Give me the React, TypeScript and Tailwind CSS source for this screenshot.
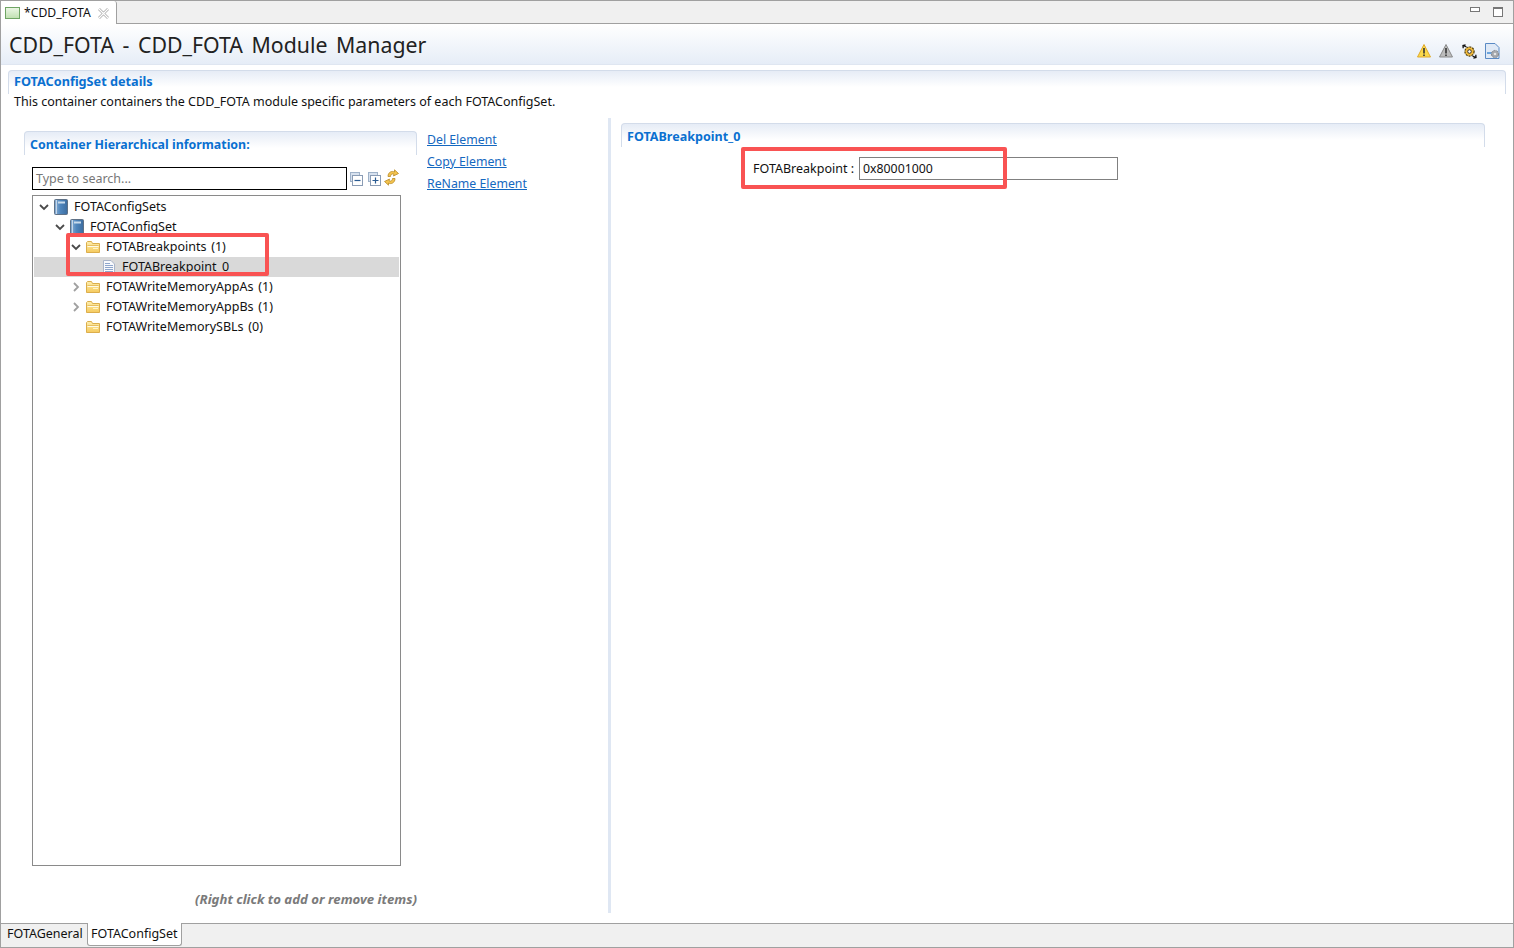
import React from 'react';

const Chevron = ({ open }: { open: boolean }) => (
  <svg width="12" height="12" viewBox="0 0 12 12" className="shrink-0">
    {open ? (
      <path d="M2 4 L6 8 L10 4" fill="none" stroke="#4a4a4a" strokeWidth="1.8" />
    ) : (
      <path d="M4 2 L8 6 L4 10" fill="none" stroke="#a0a0a0" strokeWidth="1.8" />
    )}
  </svg>
);

const BookIcon = () => (
  <svg width="14" height="16" viewBox="0 0 14 16" className="shrink-0">
    <defs>
      <linearGradient id="bookFill" x1="0" y1="0" x2="1" y2="0">
        <stop offset="0" stopColor="#8fb2d6" />
        <stop offset="0.45" stopColor="#4f86bd" />
        <stop offset="1" stopColor="#3c6c9f" />
      </linearGradient>
    </defs>
    <rect x="0.5" y="0.5" width="13" height="15" rx="1" fill="url(#bookFill)" stroke="#5f7186" />
    <path d="M2.5 1 V15" stroke="#c6d7e8" />
    <rect x="4" y="2.5" width="7" height="2" fill="#c9dbec" />
  </svg>
);

const FolderIcon = () => (
  <svg width="14" height="12" viewBox="0 0 14 12" className="shrink-0">
    <defs>
      <linearGradient id="folderFill" x1="0" y1="0" x2="0" y2="1">
        <stop offset="0" stopColor="#fdeeae" />
        <stop offset="1" stopColor="#f5ca5e" />
      </linearGradient>
    </defs>
    <path d="M0.5 1.5 L0.5 11.5 L13.5 11.5 L13.5 2.5 L6.5 2.5 L5.5 0.5 L1.5 0.5 Z" fill="url(#folderFill)" stroke="#dcae4c" />
    <path d="M1.5 4.5 H12.5" stroke="#e6bf62" />
    <path d="M1.5 5.5 H12.5" stroke="#fffbe6" />
    <path d="M7 7.5 H12" stroke="#fff4c8" />
  </svg>
);

const FileIcon = () => (
  <svg width="12" height="14" viewBox="0 0 12 14" className="shrink-0">
    <path d="M0.5 0.5 L8 0.5 L11.5 4 L11.5 13.5 L0.5 13.5 Z" fill="#f8f9fc" stroke="#aab5c9" />
    <path d="M2 3.5 H7 M2 5.5 H10 M2 7.5 H10 M2 9.5 H10 M2 11.5 H10" stroke="#8ea6cc" />
  </svg>
);

const TreeRow = ({
  indent,
  arrow,
  icon,
  label,
  selected,
}: {
  indent: string;
  arrow?: 'open' | 'closed';
  icon: React.ReactNode;
  label: string;
  selected?: boolean;
}) => (
  <div className={`h-5 flex items-center ${indent} ${selected ? 'bg-[#d9d9d9]' : ''}`}>
    <div className="w-4 flex justify-center shrink-0">{arrow && <Chevron open={arrow === 'open'} />}</div>
    <div className="w-4 flex justify-center shrink-0 ml-px">{icon}</div>
    <span className="ml-[5px] whitespace-nowrap text-[#111] [word-spacing:1.5px]">{label}</span>
  </div>
);

const SectionTitle = ({ children, className }: { children: React.ReactNode; className: string }) => (
  <div className={`rounded-t-[4px] border-t border-x border-[#d3dcea] bg-gradient-to-b from-[#e6ecf6] to-white to-70% font-bold text-[#0a70d0] ${className}`}>
    {children}
  </div>
);

const HeaderIcons = () => (
  <div className="flex items-center gap-[8.5px]">
    <svg width="14" height="14" viewBox="0 0 14 14">
      <path d="M7 0.5 L13.5 13 L0.5 13 Z" fill="#fbd94a" stroke="#e0a92a" strokeLinejoin="round" />
      <rect x="6.2" y="4" width="1.6" height="5.5" fill="#333" />
      <rect x="6.2" y="10.5" width="1.6" height="1.5" fill="#333" />
    </svg>
    <svg width="14" height="14" viewBox="0 0 14 14">
      <path d="M7 0.5 L13.5 13 L0.5 13 Z" fill="#bcbcbc" stroke="#8a8a8a" strokeLinejoin="round" />
      <rect x="6.2" y="4" width="1.6" height="5.5" fill="#333" />
      <rect x="6.2" y="10.5" width="1.6" height="1.5" fill="#333" />
    </svg>
    <svg width="15" height="15" viewBox="0 0 15 15">
      <circle cx="7.5" cy="7.5" r="4.6" fill="#f0b93a" stroke="#4d3c0c" strokeWidth="1.2" strokeDasharray="2 1" />
      <circle cx="7.5" cy="7.5" r="1.8" fill="#fff" stroke="#333" />
      <path d="M1 1.5 L4.5 3 M1.2 4.2 L1 1.5 L3.6 0.8" fill="none" stroke="#111" strokeWidth="1.3" />
      <path d="M14 13.5 L10.5 12 M13.8 10.8 L14 13.5 L11.4 14.2" fill="none" stroke="#111" strokeWidth="1.3" />
    </svg>
    <svg width="15" height="16" viewBox="0 0 15 16">
      <path d="M0.5 0.5 L10 0.5 L14 4.5 L14 15.5 L0.5 15.5 Z" fill="#dfe9f6" stroke="#5a8ac4" />
      <rect x="2" y="9" width="5" height="2" fill="#6aa3dc" />
      <circle cx="10" cy="11" r="3.6" fill="#a5a8ad" stroke="#85888d" strokeDasharray="2 1" />
      <circle cx="10" cy="11" r="1.3" fill="#e5e5e5" />
    </svg>
  </div>
);

const ToolButtons = () => (
  <div className="flex items-center gap-[5px] ml-[3px]">
    <svg width="13" height="14" viewBox="0 0 13 14">
      <rect x="0.5" y="0.5" width="9" height="9" fill="#d7e1ee" stroke="#9fb2c9" />
      <rect x="2.5" y="3.5" width="10" height="10" fill="#fff" stroke="#8a9cb5" />
      <path d="M4.5 8.5 H10.5" stroke="#2a5b92" strokeWidth="1.2" />
    </svg>
    <svg width="13" height="14" viewBox="0 0 13 14">
      <rect x="0.5" y="0.5" width="9" height="9" fill="#d7e1ee" stroke="#9fb2c9" />
      <rect x="2.5" y="3.5" width="10" height="10" fill="#fff" stroke="#8a9cb5" />
      <path d="M4.5 8.5 H10.5 M7.5 5.5 V11.5" stroke="#2a5b92" strokeWidth="1.2" />
    </svg>
    <svg width="15" height="17" viewBox="0 0 15 17" className="-ml-[2px] -mt-[2px]">
      <path d="M4 7.5 C4 3 8 1.5 10.5 3 L10.5 0.8 L14.5 4.5 L9.5 7 L10 5.2 C8 4.3 6.5 5.5 6.5 7.5 Z" fill="#f3c34f" stroke="#b98a25" strokeWidth="0.8" />
      <path d="M11 9.5 C11 14 7 15.5 4.5 14 L4.5 16.2 L0.5 12.5 L5.5 10 L5 11.8 C7 12.7 8.5 11.5 8.5 9.5 Z" fill="#f3c34f" stroke="#b98a25" strokeWidth="0.8" />
    </svg>
  </div>
);

const App = () => {
  return (
    <div className="w-[1514px] h-[948px] overflow-hidden bg-white flex flex-col border-x border-b border-[#a0a0a0] text-[12.5px] leading-5 text-[#111] font-['Noto_Sans','DejaVu_Sans',sans-serif]">
      {/* editor tab */}
      <div className="h-6 shrink-0 flex bg-[#f0f0f0] border-t border-b border-[#a0a0a0]">
        <div className="w-[116px] h-[24px] flex items-center bg-white border-r border-[#a0a0a0] rounded-tr-[3px] pl-[4px] text-[12.2px]">
          <svg width="15" height="12" viewBox="0 0 15 12" className="shrink-0">
            <defs>
              <linearGradient id="tabFill" x1="0" y1="0" x2="0" y2="1">
                <stop offset="0" stopColor="#edf7e7" />
                <stop offset="1" stopColor="#bfe0b0" />
              </linearGradient>
            </defs>
            <rect x="0.5" y="0.5" width="14" height="11" fill="url(#tabFill)" stroke="#6fa564" />
          </svg>
          <span className="ml-[4px]">*CDD_FOTA</span>
          <svg width="11" height="11" viewBox="0 0 11 11" className="ml-[7px]">
            <path d="M1 1 L10 10 M10 1 L1 10" stroke="#a8a8a8" strokeWidth="2.6" />
            <path d="M1 1 L10 10 M10 1 L1 10" stroke="#fff" strokeWidth="1.2" />
          </svg>
        </div>
        <div className="flex-1 flex justify-end items-start pt-[6px] pr-[10px] gap-[13px]">
          <div className="w-[10px] h-[5px] border border-[#777] bg-white" />
          <div className="w-[10px] h-[10px] border border-[#777] border-t-2 bg-white" />
        </div>
      </div>

      {/* form header */}
      <div className="h-[41px] shrink-0 flex items-center justify-between pl-2 pr-[13px] bg-gradient-to-b from-white to-[#e6edf7] border-b border-[#dfe6f1]">
        <span className="text-[21.3px] leading-7 text-[#222] [word-spacing:3px] mt-[2px]">CDD_FOTA - CDD_FOTA Module Manager</span>
        <div className="mt-[14px]">
          <HeaderIcons />
        </div>
      </div>

      <div className="flex-1 flex flex-col min-h-0 pl-[7px] pr-[7px] pt-[5px]">
        <SectionTitle className="h-[24px] pl-[5px] leading-[20px] text-[12.7px]">FOTAConfigSet details</SectionTitle>
        <div className="pl-[6px] h-[24px] leading-[16px]">
          This container containers the CDD_FOTA module specific parameters of each FOTAConfigSet.
        </div>

        <div className="flex-1 flex min-h-0 pb-[10px]">
          {/* left column */}
          <div className="w-[600px] shrink-0 flex flex-col pl-[16px] pt-[13px] relative">
            <div className="flex">
              <div className="w-[393px] shrink-0">
                <SectionTitle className="h-[24px] pl-[5px] pt-[3px] text-[12.4px]">Container Hierarchical information:</SectionTitle>
                <div className="flex items-center pl-[8px] mt-[12px] mb-[5px]">
                  <div className="w-[315px] h-[23px] border border-black px-[3px] text-[#777] leading-[21px]">Type to search...</div>
                  <ToolButtons />
                </div>
              </div>
              <div className="flex flex-col pl-[10px] -mt-px gap-[2px] text-[12.3px] text-[#1468c0] underline">
                <a>Del Element</a>
                <a>Copy Element</a>
                <a>ReName Element</a>
              </div>
            </div>
            <div className="ml-[8px] w-[369px] h-[671px] border border-[#8a8a8a] pt-[1px] relative">
              <div className="pl-[1px] pr-[1px]">
                <TreeRow indent="pl-[2px]" arrow="open" icon={<BookIcon />} label="FOTAConfigSets" />
                <TreeRow indent="pl-[18px]" arrow="open" icon={<BookIcon />} label="FOTAConfigSet" />
                <TreeRow indent="pl-[34px]" arrow="open" icon={<FolderIcon />} label="FOTABreakpoints (1)" />
                <TreeRow indent="pl-[50px]" icon={<FileIcon />} label="FOTABreakpoint_0" selected />
                <TreeRow indent="pl-[34px]" arrow="closed" icon={<FolderIcon />} label="FOTAWriteMemoryAppAs (1)" />
                <TreeRow indent="pl-[34px]" arrow="closed" icon={<FolderIcon />} label="FOTAWriteMemoryAppBs (1)" />
                <TreeRow indent="pl-[34px]" icon={<FolderIcon />} label="FOTAWriteMemorySBLs (0)" />
              </div>
              <div className="absolute left-[33px] top-[37px] w-[203px] h-[43px] border-[4px] border-[#f95353] rounded-[2px]" />
            </div>
            <div className="ml-[171px] mt-[23px] text-[13.2px] font-bold italic text-[#7a7a7a]">(Right click to add or remove items)</div>
          </div>

          {/* sash */}
          <div className="w-[3px] shrink-0 bg-[#dfe7f3]" />

          {/* right column */}
          <div className="flex-1 pl-[10px] pr-[21px] pt-[5px]">
            <SectionTitle className="h-[24px] pl-[5px] pt-[3px] text-[12.55px]">FOTABreakpoint_0</SectionTitle>
            <div className="relative pl-[132px] pt-[10px] flex items-start">
              <span className="h-[23px] leading-[23px] w-[106px] whitespace-nowrap">FOTABreakpoint :</span>
              <div className="w-[259px] h-[23px] border border-[#808080] px-[3px] leading-[21px] text-[12.3px]">0x80001000</div>
              <div className="absolute left-[120px] top-0 w-[266px] h-[42px] border-[4px] border-[#f95353] rounded-[2px]" />
            </div>
          </div>
        </div>
      </div>

      {/* page tabs */}
      <div className="h-6 shrink-0 flex bg-[#f0f0f0] border-t border-[#a0a0a0] pl-[2px]">
        <div className="w-[84px] h-[23px] px-[4px] leading-[20px]">FOTAGeneral</div>
        <div className="w-[95px] h-[23px] -mt-[1px] px-[3px] leading-[21px] bg-white border-x border-b border-[#a0a0a0] rounded-b-[3px]">FOTAConfigSet</div>
      </div>
    </div>
  );
};

export default App;
